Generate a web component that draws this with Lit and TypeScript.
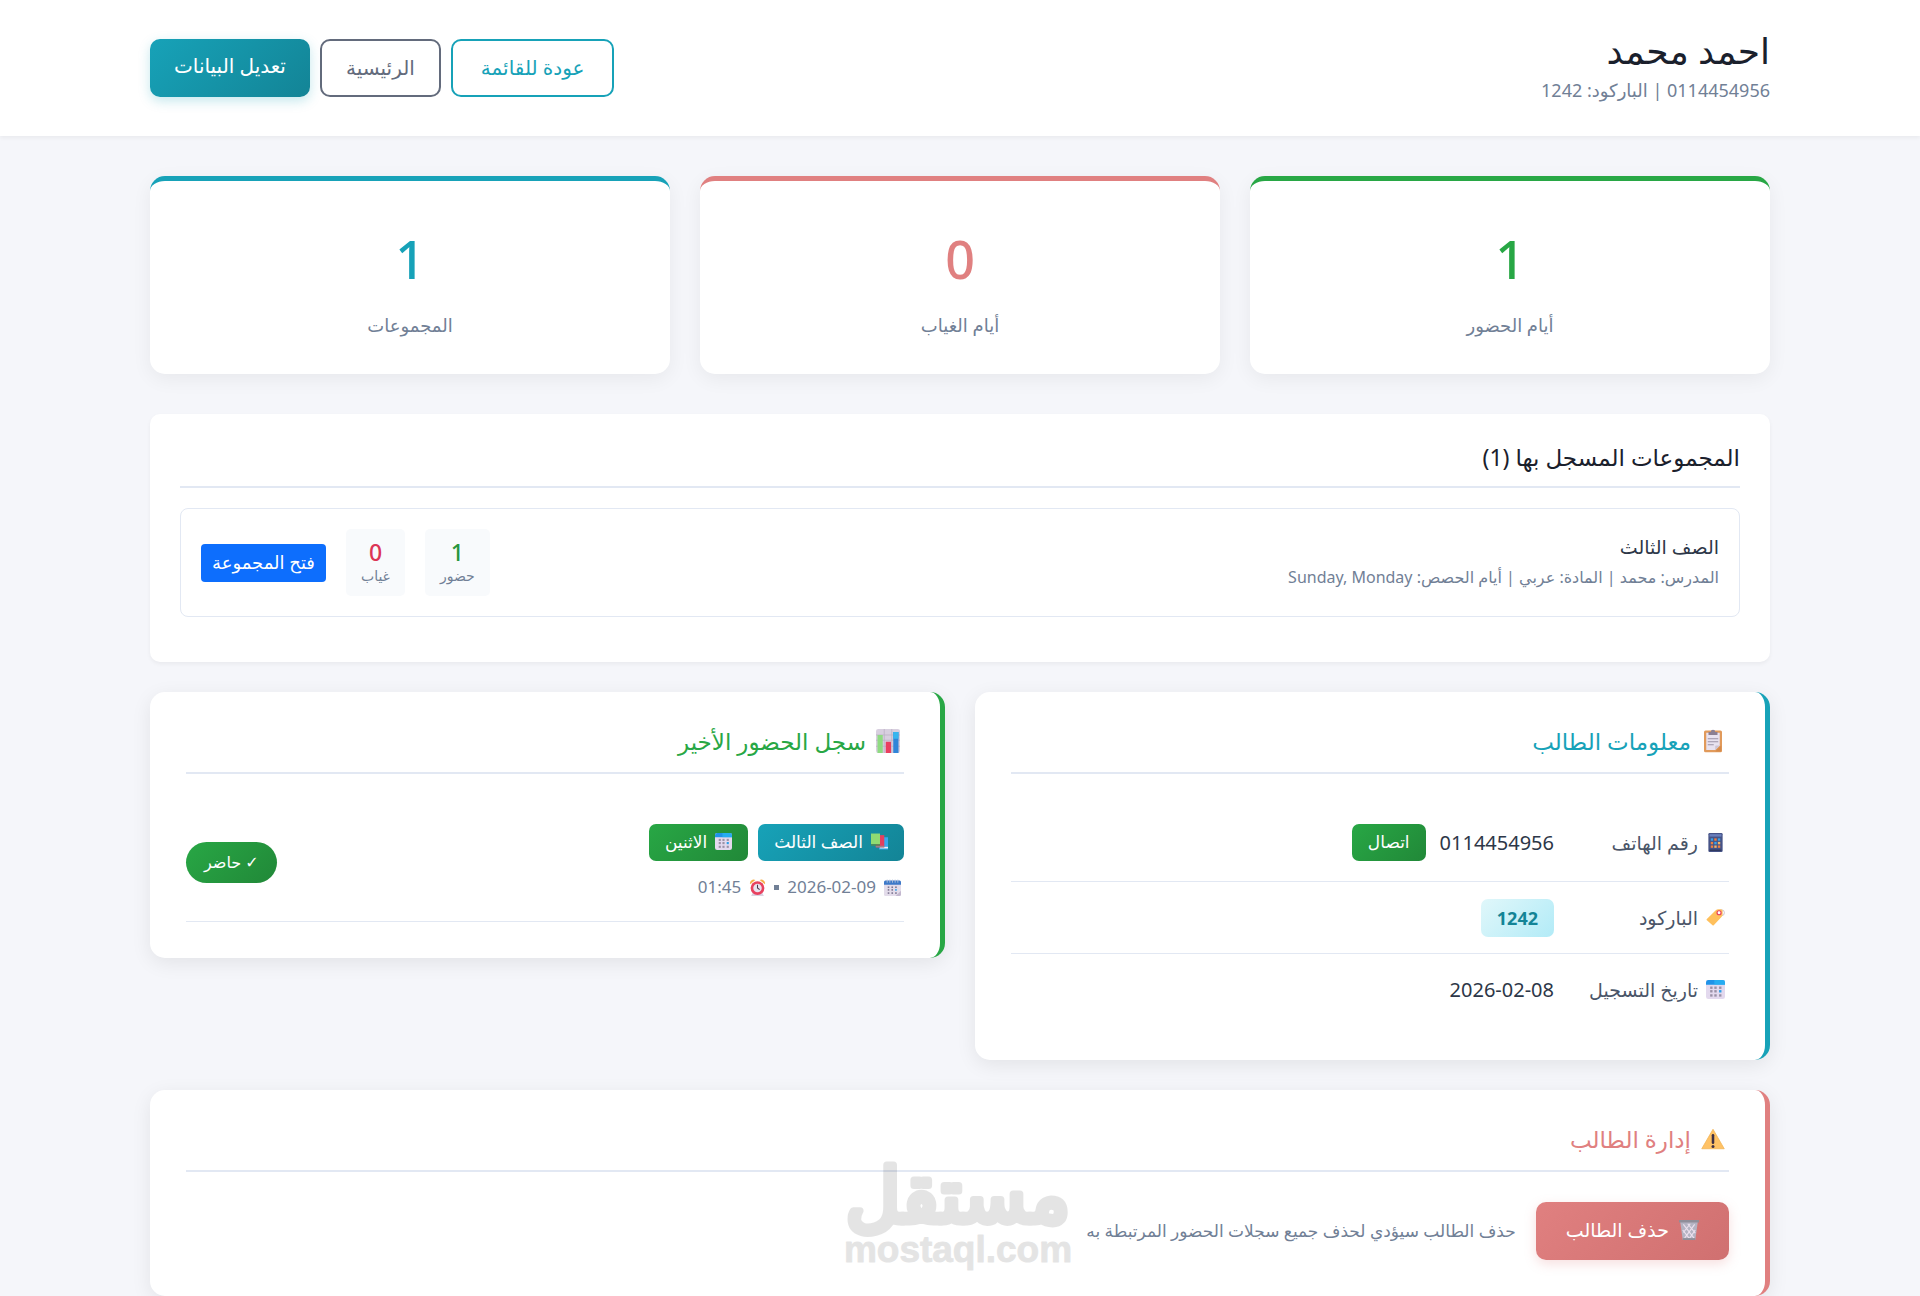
import { LitElement, html, css, svg, TemplateResult } from "lit";
import { customElement, property } from "lit/decorators.js";

const dots = (xs: number[], ys: number[], fill: string, s = 3) =>
  ys.map((y) => xs.map((x) => svg`<rect x=${x} y=${y} width=${s} height=${s} fill=${fill}></rect>`));

const icons: Record<string, TemplateResult> = {
  clipboard: svg`
    <rect x="4" y="2" width="24" height="29" rx="2" fill="#e19a5b"></rect>
    <path d="M7 5h18v17l-6 6H7z" fill="#e8e2f0"></path>
    <path d="M27 22v8h-8z" fill="#d58a4b"></path>
    <path d="M19 28v-5a1 1 0 0 1 1-1h5z" fill="#cdc4d6"></path>
    <path d="M10 8V4h3a3 3 0 0 1 6 0h3v4z" fill="#8b7f93"></path>
    <path d="M9 13h14M9 17h14M9 21h8" stroke="#9b93a6" stroke-width="1.4"></path>`,
  chart: svg`
    <rect x="0" y="0" width="32" height="32" rx="3" fill="#d8cfdf"></rect>
    <path d="M0 8h32M0 15h32M0 23h32M11 0v32M21 0v32" stroke="#b9afc2" stroke-width="1"></path>
    <path d="M2 8h7v24H2z" fill="#8fdb82"></path>
    <path d="M13 17h7v15h-7z" fill="#ea3f5f"></path>
    <path d="M23 4h7v28h-7z" fill="#3085d8"></path>
    <path d="M23 4h7v9h-7z" fill="#38b6ee"></path>`,
  phone: svg`
    <rect x="4" y="0" width="24" height="32" rx="2" fill="#465387"></rect>
    <rect x="6" y="2" width="20" height="4" fill="#6a80bd"></rect>
    <rect x="8" y="9" width="4" height="4" fill="#39a4e9"></rect>
    <rect x="14" y="9" width="4" height="4" fill="#ef8040"></rect>
    <rect x="20" y="9" width="4" height="4" fill="#39a4e9"></rect>
    <rect x="8" y="15" width="4" height="4" fill="#ef8040"></rect>
    <rect x="14" y="15" width="4" height="4" fill="#39a4e9"></rect>
    <rect x="20" y="15" width="4" height="4" fill="#f3b56a"></rect>
    <rect x="8" y="21" width="4" height="4" fill="#ef8040"></rect>
    <rect x="14" y="21" width="4" height="4" fill="#f3b56a"></rect>
    <rect x="20" y="21" width="4" height="4" fill="#ef8040"></rect>
    <rect x="6" y="28" width="20" height="2" fill="#2c3458"></rect>`,
  tag: svg`
    <circle cx="26" cy="8" r="5" fill="none" stroke="#c9c2d0" stroke-width="1.6"></circle>
    <path d="M1 19 16 4q2-2 5-2h4q3 0 3 3v5q0 3-2 5L13 29q-1 1-2 0L1 20z" fill="#ffc05c"></path>
    <circle cx="22" cy="8" r="3.4" fill="#fff" stroke="#e8415f" stroke-width="2"></circle>`,
  calendar: svg`
    <rect x="0" y="0" width="32" height="32" rx="4" fill="#e3d9ee"></rect>
    <path d="M0 8V4a4 4 0 0 1 4-4h24a4 4 0 0 1 4 4v4z" fill="#1f93e8"></path>
    <path d="M14 0h14a4 4 0 0 1 4 4v4H14z" fill="#2bbdf6" opacity=".6"></path>
    ${dots([7, 14], [11, 17, 24], "#9a91a6", 4)}
    ${dots([22], [11, 24], "#9a91a6", 4)}
    ${dots([22], [17], "#2b9fe8", 4)}`,
  spiral: svg`
    <rect x="0" y="3" width="32" height="29" rx="3" fill="#e3dcea"></rect>
    <path d="M0 11V6a3 3 0 0 1 3-3h26a3 3 0 0 1 3 3v5z" fill="#3d79c9"></path>
    <path d="M6 1v6M11 1v6M16 1v6M21 1v6M26 1v6" stroke="#b9c6da" stroke-width="1.6"></path>
    ${dots([7, 14], [14, 19, 25], "#7d7590", 3)}
    ${dots([21], [14, 25], "#7d7590", 3)}
    ${dots([21], [19], "#2b9fe8", 3)}
    <path d="M32 22v7a3 3 0 0 1-3 3h-7z" fill="#c3b8cf"></path>`,
  books: svg`
    <path d="M15 8h17v23H15z" fill="#38a9ee"></path>
    <path d="M17 26h15v3H17z" fill="#e9f4fb"></path>
    <path d="M9 4h16v23H9z" fill="#e4405f"></path>
    <path d="M9 24h16v3H9z" fill="#9d7f8b"></path>
    <path d="M0 1h17v20H0z" fill="#8fdb72"></path>
    <path d="M0 21h17v3H0z" fill="#4d8b58"></path>`,
  alarm: svg`
    <path d="M2 10a7 7 0 0 1 10-8zM30 10a7 7 0 0 0-10-8z" fill="#f6b04c"></path>
    <path d="M7 26h18l3 6H4z" fill="#d9d2e2"></path>
    <circle cx="16" cy="17" r="13" fill="#e8415f"></circle>
    <circle cx="16" cy="17" r="8" fill="#e9e3f0"></circle>
    <path d="M16 11v6l4 3" stroke="#4a3a4f" stroke-width="2" fill="none"></path>`,
  warning: svg`
    <path d="M16 3 31 29H1z" fill="#ffc265" stroke="#f2b354" stroke-width="1" stroke-linejoin="round"></path>
    <path d="M16 11v10" stroke="#3f3045" stroke-width="3.4" stroke-linecap="round"></path>
    <circle cx="16" cy="26" r="2" fill="#3f3045"></circle>`,
  trash: svg`
    <path d="M2 3h28l-4 29H6z" fill="#b4b3c2"></path>
    <path d="m7 7 17 22M14 6l12 15M6 16l10 13M25 7 9 29M18 6 7 20M26 16l-9 13" stroke="#ece0ee" stroke-width="1.8"></path>
    <rect x="0" y="0" width="32" height="4" rx="1" fill="#8f8e99"></rect>
    <path d="M6 29h20v3H6z" fill="#8f8e99"></path>`,
};

@customElement("pic-icon")
export class PicIcon extends LitElement {
  static styles = css`
    :host {
      display: inline-block;
      flex: none;
      width: 19px;
      height: 19px;
    }
    svg {
      display: block;
      width: 100%;
      height: 100%;
    }
  `;
  @property() name = "";
  render() {
    return html`<svg viewBox="0 0 32 32" aria-hidden="true">${icons[this.name]}</svg>`;
  }
}

interface Stat {
  value: number;
  label: string;
  tone: string;
}

const stats: Stat[] = [
  { value: 1, label: "أيام الحضور", tone: "green" },
  { value: 0, label: "أيام الغياب", tone: "red" },
  { value: 1, label: "المجموعات", tone: "teal" },
];

@customElement("app-root")
export class AppRoot extends LitElement {
  static styles = css`
    :host {
      --teal: #17a2b8;
      --green: #28a745;
      --red: #e08080;
      --line: #e2e8f3;
      --muted: #718096;
      --teal-fill: linear-gradient(135deg, #17a2b8, #138496);
      --green-fill: linear-gradient(135deg, #28a745, #218838);
      --red-fill: linear-gradient(135deg, #e08080, #d07070);
      display: block;
      min-height: 100vh;
      background: #f5f6fa;
      color: #2d3748;
      font-family: "Noto Sans", "DejaVu Sans", sans-serif;
      font-size: 17px;
      line-height: 28px;
    }
    * {
      box-sizing: border-box;
    }
    h1, h2, h3, p, dl, dd, ul {
      margin: 0;
      padding: 0;
      font-weight: 400;
    }
    a {
      text-decoration: none;
    }
    .wrap {
      max-width: 1660px;
      margin: 0 auto;
      padding: 0 20px;
    }
    .top {
      background: #fff;
      box-shadow: 0 2px 4px rgba(0, 0, 0, 0.05);
    }
    .top-row {
      display: flex;
      justify-content: space-between;
      align-items: center;
      padding-top: 29px;
      padding-bottom: 29px;
    }
    .name {
      font-size: 36px;
      line-height: 44px;
      color: #1a202c;
    }
    .sub {
      font-size: 18px;
      line-height: 34px;
      color: var(--muted);
    }
    .actions {
      display: flex;
      gap: 10px;
    }
    .btn {
      display: flex;
      align-items: center;
      justify-content: center;
      gap: 10px;
      height: 58px;
      padding: 0 24px;
      border: 2px solid;
      border-radius: 10px;
      font: inherit;
      font-size: 20px;
      cursor: pointer;
    }
    .btn.back {
      padding: 0 28px;
      color: var(--teal);
    }
    .btn.home {
      color: #636b7c;
    }
    .btn.solid {
      border: 0;
      color: #fff;
      font-weight: 500;
    }
    .btn.edit {
      padding-bottom: 4px;
      background: var(--teal-fill);
      box-shadow: 0 4px 12px rgba(23, 162, 184, 0.25);
    }
    .btn.delete {
      padding: 0 30px 2px;
      background: var(--red-fill);
      box-shadow: 0 4px 12px rgba(224, 128, 128, 0.25);
      font-size: 19px;
    }
    .btn.delete pic-icon {
      width: 20px;
      height: 20px;
    }
    .stats {
      display: grid;
      grid-template-columns: repeat(3, 1fr);
      gap: 30px;
      margin-top: 40px;
    }
    .stat {
      padding: 38px 30px 33px;
      border-top: 5px solid var(--tone);
      border-radius: 15px;
      background: #fff;
      box-shadow: 0 5px 20px rgba(0, 0, 0, 0.06);
      text-align: center;
    }
    .stat-value {
      font-size: 52px;
      font-weight: 500;
      line-height: 80px;
      color: var(--tone);
    }
    .stat-label {
      margin-top: 10px;
      font-size: 18px;
      line-height: 32px;
      color: var(--muted);
    }
    .teal {
      --tone: var(--teal);
    }
    .green {
      --tone: var(--green);
    }
    .red {
      --tone: var(--red);
    }
    .groups {
      margin-top: 40px;
      padding: 30px;
      border-radius: 10px;
      background: #fff;
      box-shadow: 0 2px 4px rgba(0, 0, 0, 0.05);
    }
    .groups-title {
      padding-bottom: 16px;
      border-bottom: 2px solid var(--line);
      font-size: 23px;
      line-height: 26px;
      color: #1a202c;
    }
    .group {
      display: flex;
      justify-content: space-between;
      align-items: center;
      margin: 20px 0 15px;
      padding: 20px;
      border: 1px solid var(--line);
      border-radius: 8px;
    }
    .group-name {
      font-size: 19px;
      line-height: 28px;
    }
    .group-meta {
      font-size: 16px;
      line-height: 32px;
      color: var(--muted);
    }
    .group-side {
      display: flex;
      align-items: center;
      gap: 20px;
    }
    .tile {
      padding: 10px 15px;
      border-radius: 5px;
      background: #f8fafc;
      text-align: center;
    }
    .tile-value {
      font-size: 23px;
      font-weight: 500;
      line-height: 26px;
      color: #28963f;
    }
    .tile-value.absent {
      color: #dc3555;
    }
    .tile-label {
      font-size: 14px;
      line-height: 21px;
      color: var(--muted);
    }
    .open {
      padding: 4px 11px 6px;
      border-radius: 4px;
      background: #0d6efd;
      color: #fff;
      font-size: 18px;
    }
    .pair {
      display: grid;
      grid-template-columns: 1fr 1fr;
      align-items: start;
      gap: 30px;
      margin: 30px 0;
    }
    .card {
      padding: 36px;
      border-inline-start: 5px solid var(--tone);
      border-radius: 15px;
      background: #fff;
      box-shadow: 0 5px 20px rgba(0, 0, 0, 0.08);
    }
    .card-title {
      display: flex;
      align-items: center;
      gap: 10px;
      margin-bottom: 30px;
      padding: 0 4px 18px;
      border-bottom: 2px solid var(--line);
      font-size: 23px;
      line-height: 26px;
      color: var(--tone);
    }
    .card-title pic-icon {
      width: 24px;
      height: 24px;
    }
    .row {
      display: grid;
      grid-template-columns: 175px 1fr;
      align-items: center;
      padding: 16px 0;
      border-bottom: 1px solid var(--line);
    }
    .row:last-child {
      padding-bottom: 15px;
      border-bottom: 0;
    }
    .key {
      display: flex;
      align-items: center;
      gap: 8px;
      padding-inline-start: 4px;
      color: #4a5568;
      font-size: 19px;
    }
    .val {
      display: flex;
      align-items: center;
      min-height: 39px;
      gap: 14px;
      font-size: 20px;
    }
    .chip {
      display: flex;
      align-items: center;
      gap: 8px;
      height: 37px;
      padding: 0 16px 2px;
      border-radius: 7px;
      background: var(--green-fill);
      color: #fff;
      font-size: 17px;
      font-weight: 500;
    }
    .chip.course {
      background: var(--teal-fill);
    }
    .chip pic-icon, .when pic-icon {
      width: 17px;
      height: 17px;
    }
    .call {
      margin: 4px 0;
    }
    .code {
      padding: 5px 16px;
      border-radius: 7px;
      background: linear-gradient(135deg, #e0f7fa, #b2ebf7);
      color: #138496;
      font-size: 18px;
      font-weight: 700;
    }
    .visit {
      display: flex;
      justify-content: space-between;
      align-items: center;
      padding: 20px 0;
      border-bottom: 1px solid var(--line);
    }
    .chips {
      display: flex;
      gap: 10px;
    }
    .when {
      display: flex;
      align-items: center;
      gap: 8px;
      margin-top: 12px;
      padding-inline-start: 3px;
      color: var(--muted);
    }
    .dot {
      width: 5px;
      height: 5px;
      background: var(--muted);
    }
    .status {
      padding: 6px 18px 7px;
      border-radius: 21px;
      background: var(--green-fill);
      color: #fff;
      font-size: 16px;
      font-weight: 500;
    }
    .manage {
      display: flex;
      align-items: center;
      gap: 20px;
    }
    .note {
      color: var(--muted);
    }
    .manage-card {
      position: relative;
    }
    .mark {
      position: absolute;
      left: 50%;
      bottom: 10px;
      width: 260px;
      height: 150px;
      margin-left: -130px;
      opacity: 0.1;
      pointer-events: none;
    }
    .mark text {
      text-anchor: middle;
      stroke: #000;
      stroke-linejoin: round;
    }
    .mark-ar {
      font: 400 75px "DejaVu Sans", sans-serif;
      stroke-width: 7px;
    }
    .mark-en {
      font: 700 37px "Liberation Sans", sans-serif;
      stroke-width: 1px;
    }
  `;

  private stat(s: Stat) {
    return html`<div class="stat ${s.tone}">
      <div class="stat-value">${s.value}</div>
      <div class="stat-label">${s.label}</div>
    </div>`;
  }

  render() {
    return html`
      <div dir="rtl" lang="ar">
        <header class="top">
          <div class="wrap top-row">
            <div>
              <h1 class="name">احمد محمد</h1>
              <p class="sub"><bdi>0114454956</bdi> | الباركود: 1242</p>
            </div>
            <nav class="actions">
              <a class="btn back" href="#students">عودة للقائمة</a>
              <a class="btn home" href="#home">الرئيسية</a>
              <a class="btn solid edit" href="#edit">تعديل البيانات</a>
            </nav>
          </div>
        </header>
        <main class="wrap">
          <section class="stats">${stats.map((s) => this.stat(s))}</section>

          <section class="groups">
            <h2 class="groups-title">المجموعات المسجل بها (1)</h2>
            <div class="group">
              <div>
                <h3 class="group-name">الصف الثالث</h3>
                <p class="group-meta">المدرس: محمد | المادة: عربي | أيام الحصص: <bdi>Sunday, Monday</bdi></p>
              </div>
              <div class="group-side">
                <div class="tile">
                  <div class="tile-value">1</div>
                  <div class="tile-label">حضور</div>
                </div>
                <div class="tile">
                  <div class="tile-value absent">0</div>
                  <div class="tile-label">غياب</div>
                </div>
                <a class="open" href="#group">فتح المجموعة</a>
              </div>
            </div>
          </section>

          <div class="pair">
            <section class="card teal">
              <h2 class="card-title"><pic-icon name="clipboard"></pic-icon>معلومات الطالب</h2>
              <dl>
                <div class="row">
                  <dt class="key"><pic-icon name="phone"></pic-icon>رقم الهاتف</dt>
                  <dd class="val">0114454956 <a class="chip call" href="tel:0114454956">اتصال</a></dd>
                </div>
                <div class="row">
                  <dt class="key"><pic-icon name="tag"></pic-icon>الباركود</dt>
                  <dd class="val"><span class="code">1242</span></dd>
                </div>
                <div class="row">
                  <dt class="key"><pic-icon name="calendar"></pic-icon>تاريخ التسجيل</dt>
                  <dd class="val"><bdi dir="ltr">2026-02-08</bdi></dd>
                </div>
              </dl>
            </section>

            <section class="card green">
              <h2 class="card-title"><pic-icon name="chart"></pic-icon>سجل الحضور الأخير</h2>
              <div class="visit">
                <div>
                  <div class="chips">
                    <span class="chip course"><pic-icon name="books"></pic-icon>الصف الثالث</span>
                    <span class="chip"><pic-icon name="calendar"></pic-icon>الاثنين</span>
                  </div>
                  <div class="when">
                    <pic-icon name="spiral"></pic-icon><bdi dir="ltr">2026-02-09</bdi>
                    <span class="dot"></span>
                    <pic-icon name="alarm"></pic-icon><bdi dir="ltr">01:45</bdi>
                  </div>
                </div>
                <span class="status">✓ حاضر</span>
              </div>
            </section>
          </div>

          <section class="card red manage-card">
            <h2 class="card-title"><pic-icon name="warning"></pic-icon>إدارة الطالب</h2>
            <div class="manage">
              <button class="btn solid delete" type="button"><pic-icon name="trash"></pic-icon>حذف الطالب</button>
              <p class="note">حذف الطالب سيؤدي لحذف جميع سجلات الحضور المرتبطة به</p>
            </div>
            <svg class="mark" viewBox="0 0 260 150">
              <text class="mark-ar" x="130" y="86">مستقل</text>
              <text class="mark-en" x="130" y="126">mostaql.com</text>
            </svg>
          </section>
        </main>
      </div>
    `;
  }
}
